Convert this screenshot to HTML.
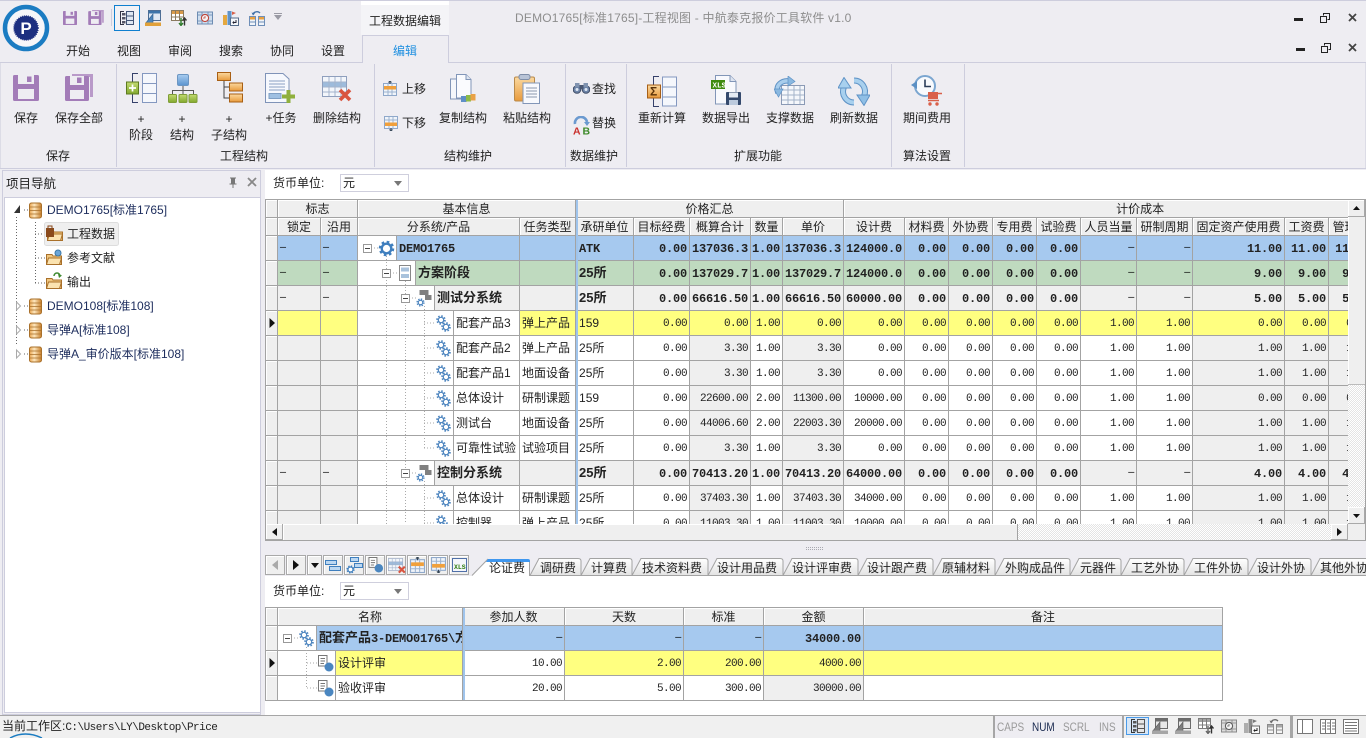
<!DOCTYPE html>
<html><head><meta charset="utf-8"><style>
*{box-sizing:border-box}
html,body{margin:0;padding:0}
body{width:1366px;height:738px;overflow:hidden;background:#eeedf2;position:relative;font:12px/16px "Liberation Sans","Noto Sans CJK SC",sans-serif;color:#222}
.a{position:absolute}
.t{position:absolute;white-space:nowrap;line-height:16px}
.c{position:absolute;white-space:nowrap;line-height:16px;transform:translateX(-50%)}
.sep{position:absolute;top:64px;width:1px;height:103px;background:#cdcddd}
.grid{position:absolute;overflow:hidden;background:#fff}
table{border-collapse:separate;border-spacing:0;table-layout:fixed;position:absolute;left:0;top:0}
td,th{box-sizing:border-box;border-right:1px solid #a3a3a3;border-bottom:1px solid #a3a3a3;overflow:hidden;white-space:nowrap;padding:2px 2px 0 0;text-align:right;font:11px/14px "Liberation Mono",monospace;letter-spacing:-.6px;color:#222;height:25px}
th{height:18px;background:#efefef;font:12px/16px "Liberation Sans","Noto Sans CJK SC",sans-serif;letter-spacing:0;text-align:center;font-weight:400;padding:0;box-shadow:inset 1px 1px #fff}
td.l{font:12px/14px "Liberation Sans","Noto Sans CJK SC",sans-serif;letter-spacing:0;text-align:left;padding:0 0 0 2px}
td.u{padding-left:3px}
td.f{text-align:left;padding-left:2px;font-weight:400!important;font-size:10px!important;color:#000}
td.d{font-weight:400!important;font-size:10px!important;color:#000}
td.tr{padding:0;background:#fff!important;text-align:left}
td:first-child{background:#efefef!important;box-shadow:inset 1px 1px #fff}
.n{height:24px;border-left:1px solid #a3a3a3;padding-left:2px;font:12px/24px "Liberation Sans","Noto Sans CJK SC",sans-serif;letter-spacing:0;overflow:hidden}
.b td{background:#a6c9ef}.b .n{background:#a6c9ef}
.g td{background:#bfdabf}.g .n{background:#bfdabf}
.h td{background:#efefef}.h .n{background:#efefef}
.y td{background:#ffff80}.y .n{background:#ffff80}
.b td,.g td,.h td{font-weight:700;font-size:12px;letter-spacing:-.2px}
.b td.l,.g td.l,.h td.l{font-size:13px;letter-spacing:0}
.b .n,.g .n,.h .n{font-weight:700;font-size:13px}
.m{font-family:"Liberation Mono",monospace;font-size:12px;letter-spacing:-.2px}
.k td:nth-child(2),.k td:nth-child(3),.k td:nth-child(8),.k td:nth-child(10),.k td:nth-child(18),.k td:nth-child(19),.k td:nth-child(20){background:#efefef}
.bar{position:absolute;background:#9fc4ec;width:2px}
.btn{position:absolute;top:555px;height:20px;background:#efefef;border:1px solid #a9a9a9;box-shadow:inset 1px 1px #fff}
.combo{position:absolute;width:69px;height:18px;background:#fff;border:1px solid #cfcfdd;padding-left:2px;line-height:16px}
.combo:after{content:"";position:absolute;right:6px;top:6px;border:4px solid transparent;border-top:5px solid #777;border-bottom:0}
.ind{position:absolute;top:719px;line-height:16px;font-size:12px;color:#999;transform:scaleX(.83);transform-origin:0 50%}
.dither{background:repeating-conic-gradient(#e4e4e4 0 25%,#fff 0 50%) 0 0/2px 2px}
.sb{position:absolute;background:#efefef;border-right:1px solid #a9a9a9;border-bottom:1px solid #a9a9a9;box-shadow:inset 1px 1px #fff}
</style></head><body>

<svg width="0" height="0" style="position:absolute"><defs>
<linearGradient id="org" x1="0" y1="0" x2="0" y2="1"><stop offset="0" stop-color="#fbd9a0"/><stop offset="1" stop-color="#e89a3c"/></linearGradient>
<linearGradient id="grn" x1="0" y1="0" x2="0" y2="1"><stop offset="0" stop-color="#c3db72"/><stop offset="1" stop-color="#82a82e"/></linearGradient>
<linearGradient id="blu" x1="0" y1="0" x2="0" y2="1"><stop offset="0" stop-color="#a9cdf0"/><stop offset="1" stop-color="#5b94cf"/></linearGradient>
<linearGradient id="db" x1="0" y1="0" x2="1" y2="0"><stop offset="0" stop-color="#e9a550"/><stop offset=".4" stop-color="#fde6bd"/><stop offset="1" stop-color="#c8802c"/></linearGradient>
<linearGradient id="tab" x1="0" y1="0" x2="0" y2="1"><stop offset="0" stop-color="#fff"/><stop offset="1" stop-color="#e3e3e3"/></linearGradient>

<symbol id="sv" viewBox="0 0 26 26"><rect width="26" height="26" rx="1.5" fill="#a37cb8"/><path fill="#eeedf2" d="M5 0H21V9H5z"/><rect x="14" y="1.500" width="4.500" height="5.500" fill="#a37cb8"/><rect x="5" y="14" width="16" height="10" fill="#eeedf2"/></symbol>
<symbol id="sa" viewBox="0 0 28 27"><path fill="#b99ac9" d="M7 0H28V23H25V3H7z"/><rect y="2" width="24" height="25" rx="1.500" fill="#a37cb8"/><path fill="#eeedf2" d="M5 2H19V11H5z"/><rect x="12" y="3.500" width="4.500" height="5.500" fill="#a37cb8"/><rect x="5" y="16" width="14" height="9" fill="#eeedf2"/></symbol>

<symbol id="tb" viewBox="0 0 15 30"><rect x=".5" y=".5" width="14" height="29" fill="#f5f7fc" stroke="#8498c0"/><path d="M1 10.500H14M1 20.500H14" stroke="#8498c0" fill="none"/></symbol>

<symbol id="stage" viewBox="0 0 31 30"><path d="M12 .5H6.500V29.500H12" fill="none" stroke="#35406a"/><use href="#tb" x="16" y="0" width="15" height="30"/><rect x=".5" y="9" width="12" height="12" fill="url(#grn)" stroke="#5d7a20"/><path d="M6.500 11.500V18.500M3 15H10" stroke="#fff" stroke-width="1.700"/></symbol>

<symbol id="struct" viewBox="0 0 30 30"><rect x="9.500" y=".5" width="11" height="11" rx="1.500" fill="url(#blu)" stroke="#6c96c2"/><path d="M15 12V16M4.500 21V16.500H25.500V21M15 16.500V21" stroke="#555" fill="none"/><g fill="url(#grn)" stroke="#7f9d38"><rect x=".5" y="20.500" width="8" height="8" rx="1"/><rect x="11" y="20.500" width="8" height="8" rx="1"/><rect x="21" y="20.500" width="8" height="8" rx="1"/></g></symbol>

<symbol id="sub" viewBox="0 0 26 31"><rect x=".5" y=".5" width="13" height="8" fill="url(#org)" stroke="#a85f14"/><path d="M7 9V26H12M7 15H12" stroke="#444" fill="none"/><rect x="12.500" y="11" width="13" height="8" fill="url(#org)" stroke="#a85f14"/><rect x="12.500" y="22" width="13" height="8" fill="url(#org)" stroke="#a85f14"/></symbol>

<symbol id="task" viewBox="0 0 31 31"><path d="M.5.5H18L24 6V29.500H.5z" fill="#f6f8fd" stroke="#7f93b8"/><path d="M4 8H20M4 11H20M4 14H20M4 17H20" stroke="#8aa0c4" fill="none"/><rect x="4" y="20.500" width="12" height="5" fill="#9fc0e2" stroke="#7f9fc4"/><path d="M23.500 17V30M17 23.500H30" stroke="#8fb03c" stroke-width="4"/></symbol>

<symbol id="del" viewBox="0 0 30 26"><rect x=".5" y=".5" width="24" height="20" fill="#f3f6fb" stroke="#8f9fbd"/><rect x="1" y="6" width="23" height="5" fill="#9dbbdc"/><path d="M1 6H24M1 11H24M1 16H24M7 1V20M13 1V20M19 1V20" stroke="#a4b4cc" fill="none"/><path d="M18 14L28 24M28 14L18 24" stroke="#d9543f" stroke-width="3.600"/></symbol>

<symbol id="up" viewBox="0 0 14 15"><rect x=".5" y="2.500" width="13" height="12" fill="#f0f4fa" stroke="#8fa8ca"/><path d="M5 3V14M9 3V14M1 11H13" stroke="#9db3d0" fill="none"/><rect x="1" y="5" width="12" height="3.500" fill="#f0a03c"/><path d="M7 3V0M5.500 1.500L7 0L8.500 1.500" stroke="#345" fill="none"/></symbol>
<symbol id="dn" viewBox="0 0 14 15"><rect x=".5" y=".5" width="13" height="12" fill="#f0f4fa" stroke="#8fa8ca"/><path d="M5 1V12M9 1V12M1 4H13" stroke="#9db3d0" fill="none"/><rect x="1" y="6.500" width="12" height="3.500" fill="#f0a03c"/><path d="M7 12V15M5.500 13.500L7 15L8.500 13.500" stroke="#345" fill="none"/></symbol>

<symbol id="copy" viewBox="0 0 27 30"><path d="M.5 5H10L13 8V25H.5z" fill="#f5f7fb" stroke="#8296b8"/><path d="M6.500.5H16L21 5.500V24H6.500z" fill="#fafbfe" stroke="#8296b8"/><path d="M16 .5V5.500H21" fill="#dfe6f1" stroke="#8296b8"/><rect x="11" y="22" width="5.500" height="6" fill="#5f8fc7"/><rect x="16" y="21" width="5" height="6.500" fill="#8dbb48"/><rect x="20.500" y="20" width="5" height="6.500" fill="#e9a247"/></symbol>

<symbol id="paste" viewBox="0 0 26 30"><rect x=".5" y="3" width="20" height="24" rx="1.500" fill="url(#org)" stroke="#b98a4a"/><rect x="5" y=".5" width="11" height="5" rx="2" fill="#b8c3d6" stroke="#7f8ea8"/><rect x="9" y="9" width="16.500" height="20.500" fill="#f8f9fd" stroke="#8296b8"/><path d="M12 14H23M12 17H23M12 20H23M12 23H23" stroke="#8a97ad" fill="none"/></symbol>

<symbol id="bino" viewBox="0 0 17 12"><circle cx="4" cy="7.500" r="3.800" fill="#6d84a8" stroke="#3e4c66"/><circle cx="13" cy="7.500" r="3.800" fill="#6d84a8" stroke="#3e4c66"/><rect x="2" y="1" width="4.500" height="4" fill="#8093b0"/><rect x="10.500" y="1" width="4.500" height="4" fill="#8093b0"/><rect x="6.500" y="3" width="4" height="4" fill="#4a5873"/><circle cx="4" cy="7.500" r="1.500" fill="#dfe8f4"/><circle cx="13" cy="7.500" r="1.500" fill="#dfe8f4"/></symbol>

<symbol id="repl" viewBox="0 0 17 19"><path d="M2 8A6 6 0 0 1 14 6" fill="none" stroke="#6b9ad0" stroke-width="2.600"/><path d="M11 6H17L14 10z" fill="#6b9ad0"/><text x="0" y="18.500" font-family="Liberation Sans" font-weight="700" font-size="10.500" fill="#c9302c">A</text><text x="9.500" y="18.500" font-family="Liberation Sans" font-weight="700" font-size="10.500" fill="#3d8a2a">B</text></symbol>

<symbol id="calc" viewBox="0 0 30 31"><path d="M12 .5H6.500V30.500H12" fill="none" stroke="#35406a"/><use href="#tb" x="15" y="0" width="15" height="31"/><rect x=".5" y="9" width="13" height="13" fill="url(#org)" stroke="#a65f17"/><text x="3" y="19.500" font-family="Liberation Sans" font-weight="700" font-size="12" fill="#5b3208">Σ</text></symbol>

<symbol id="xls" viewBox="0 0 30 30"><path d="M4.500.5H19L25 6.500V29H4.500z" fill="#f8f9fd" stroke="#8296b8"/><path d="M19 .5V6.500H25" fill="#dde4f0" stroke="#8296b8"/><rect y="5" width="14" height="9" fill="#3f8a10"/><text x="1.500" y="12.500" font-family="Liberation Mono" font-weight="700" font-size="7.500" fill="#fff">XLS</text><rect x="15" y="17" width="15" height="13" rx="1" fill="#354a6d"/><rect x="18" y="17.500" width="9" height="5" fill="#e5ebf4"/><rect x="18" y="25" width="9" height="5" fill="#bccadd"/></symbol>

<symbol id="sup" viewBox="0 0 31 29"><rect x="7.500" y="9.500" width="23" height="19" fill="#f5f7fb" stroke="#8b9ab5"/><path d="M8 14H30M8 19H30M8 24H30M14 10V28M20 10V28M26 10V28" stroke="#a4b3ca" fill="none"/><path d="M4 17C1 9 8 4 15 5" fill="none" stroke="#5f93c6" stroke-width="5.500"/><path d="M4 17C1 9 8 4 15 5" fill="none" stroke="#a8cdec" stroke-width="3.500"/><path d="M14 0L21 5.500L14 10z" fill="#8ab8e0" stroke="#5f93c6" stroke-width=".7"/><path d="M0 13H9L4.500 21z" fill="#8ab8e0" stroke="#5f93c6" stroke-width=".7"/></symbol>

<symbol id="ref" viewBox="0 0 32 29"><path d="M16 25.500A11 11 0 0 1 6 10" fill="none" stroke="#5f93c6" stroke-width="6"/><path d="M16 25.500A11 11 0 0 1 6 10" fill="none" stroke="#a8d0ee" stroke-width="4"/><path d="M16 3.500A11 11 0 0 1 26 19" fill="none" stroke="#5f93c6" stroke-width="6"/><path d="M16 3.500A11 11 0 0 1 26 19" fill="none" stroke="#a8d0ee" stroke-width="4"/><path d="M6 .5L13 11H0z" fill="#a8d0ee" stroke="#5f93c6"/><path d="M26 28.500L19 18H32z" fill="#8fbfe6" stroke="#5f93c6"/></symbol>

<symbol id="per" viewBox="0 0 32 32"><circle cx="14" cy="11" r="10" fill="#f8fafd" stroke="#7ba6d0" stroke-width="2"/><path d="M14 4.500V11.500H20" fill="none" stroke="#2c3e5a" stroke-width="1.600"/><path d="M0 10L6 6V14z" fill="#5c90c4"/><rect x="17" y="17" width="10" height="7" fill="#d9604a"/><path d="M27 18.500H31M17 25.500H28" stroke="#d9604a" stroke-width="1.600"/><circle cx="19" cy="29" r="1.700" fill="#d9604a"/><circle cx="26" cy="29" r="1.700" fill="#d9604a"/></symbol>

<symbol id="q1" viewBox="0 0 14 14"><path d="M4 .5H.5V13.500H4" fill="none" stroke="#334"/><rect x="6.500" y=".5" width="7" height="13" fill="#dfe7f2" stroke="#445577"/><path d="M7 5H13M7 9.500H13" stroke="#445577"/><rect x="2" y="2" width="3.500" height="2.500" fill="#556"/><rect x="2" y="6" width="3.500" height="2.500" fill="#556"/><rect x="2" y="10" width="3.500" height="2.500" fill="#556"/></symbol>
<symbol id="q2" viewBox="0 0 16 16"><rect x="3.500" y=".5" width="12" height="10" fill="#dfe8f4" stroke="#4e6e95"/><rect x="4" y="1" width="11" height="2.500" fill="#3d74aa"/><path d="M0 14L8 4V14z" fill="#4c85bb" stroke="#2c5a8a" stroke-width=".6"/><rect y="12.500" width="16" height="3.500" fill="#e0a03a"/></symbol>
<symbol id="q3" viewBox="0 0 16 16"><rect x=".5" y=".5" width="12" height="10" fill="#fff" stroke="#8a7a60"/><rect x="1" y="1" width="11" height="3" fill="#d99a4a"/><path d="M4.500 1V10M8.500 1V10M1 7H12" stroke="#8a7a60" fill="none"/><path d="M10 8V15M8 13L10 15.500L12 13" stroke="#2e7a2a" fill="none" stroke-width="1.400"/><path d="M13.500 15.500V8.500M11.500 10.500L13.500 8L15.500 10.500" stroke="#333" fill="none" stroke-width="1.400"/></symbol>
<symbol id="q4" viewBox="0 0 16 13"><rect x=".5" y=".5" width="15" height="12" fill="#cfdeef" stroke="#6d8cb2"/><path d="M1 3.500H15M1 9.500H15M5 1V12M11 1V12" stroke="#7d9bbf" fill="none"/><circle cx="8" cy="6.500" r="3.600" fill="#f5f5f5" stroke="#c0453a" stroke-width="1.100"/><path d="M8 4.500V6.500H6" stroke="#c0453a" fill="none" stroke-width=".8"/></symbol>
<symbol id="q5" viewBox="0 0 16 16"><rect x="0" y="5" width="4" height="10" fill="#e5a83f"/><rect x="4.500" y="1" width="4" height="14" fill="#5f93c8"/><path d="M9 1.500L13 3L9 5z" fill="#d9604a"/><rect x="7.500" y="8" width="8" height="7.500" fill="#f5f7fb" stroke="#556b8a"/><path d="M13 10V12.500H10M11 11.500L10 12.500L11 13.500" stroke="#223" fill="none"/></symbol>
<symbol id="q6" viewBox="0 0 16 16"><rect x=".5" y="6.500" width="6" height="9" fill="#f0f4fa" stroke="#6f8fb8"/><rect x="9.500" y="6.500" width="6" height="9" fill="#f0f4fa" stroke="#6f8fb8"/><rect x="1" y="7" width="5" height="2.500" fill="#e8a040"/><rect x="10" y="7" width="5" height="2.500" fill="#e8a040"/><path d="M1 12H6M10 12H15" stroke="#6f8fb8"/><path d="M4 4.500A4 3.500 0 0 1 11 3" fill="none" stroke="#3e6fa8" stroke-width="1.300"/><path d="M2.500 2.500L4 5.500L6 3.500z" fill="#3e6fa8"/></symbol>

<symbol id="gear" viewBox="0 0 16 16"><circle cx="8" cy="8" r="5.800" fill="none" stroke="#3f7fbe" stroke-width="3" stroke-dasharray="2.300 2.250"/><circle cx="8" cy="8" r="4.500" fill="#fff" stroke="#3f7fbe" stroke-width="2.200"/></symbol>
<symbol id="gears" viewBox="0 0 15 17"><g fill="none" stroke="#4d85bf"><circle cx="5" cy="5" r="3.800" stroke-width="2" stroke-dasharray="1.500 1.500"/><circle cx="5" cy="5" r="2.700" stroke-width="1.200"/><circle cx="10" cy="12" r="3.800" stroke-width="2" stroke-dasharray="1.500 1.500"/><circle cx="10" cy="12" r="2.700" stroke-width="1.200"/></g></symbol>
<symbol id="sys" viewBox="0 0 16 17"><rect x="3.500" y="0" width="9" height="5" fill="#808080"/><rect x="9" y="5" width="6.500" height="5" fill="#808080"/><g fill="none" stroke="#4d85bf"><circle cx="4.500" cy="12.500" r="3.200" stroke-width="1.800" stroke-dasharray="1.300 1.200"/><circle cx="4.500" cy="12.500" r="2.200" stroke-width="1.100"/></g></symbol>
<symbol id="dc" viewBox="0 0 16 17"><path d="M.5.5H9V11H.5z" fill="#fff" stroke="#777"/><path d="M2.500 3.500H7M2.500 6H7M2.500 8.500H6" stroke="#777" fill="none"/><circle cx="11" cy="12" r="4.500" fill="#4a86c0"/></symbol>
<symbol id="dbi" viewBox="0 0 13 17"><rect x=".5" y="1" width="12" height="15" rx="2" fill="url(#db)" stroke="#a9702a"/><path d="M1 5H12M1 8.500H12M1 12H12" stroke="#a9702a" stroke-width=".8"/></symbol>
<symbol id="fold" viewBox="0 0 16 14"><path d="M.5 3.500H6L7 5H15.500V13.500H.5z" fill="#f0c67e" stroke="#a9702a"/><path d="M2.500 7H15.500L13.500 13.500H.5z" fill="#fbe3b0" stroke="#a9702a"/></symbol>
</defs></svg>

<!-- Top strip -->
<div class="a" style="left:0;top:0;width:1366px;height:1px;background:#cdcddd"></div>
<div class="a" style="left:361px;top:1px;width:88px;height:5px;background:#fff"></div>
<div class="a" style="left:361px;top:5px;width:88px;height:30px;background:#f4f4f7"></div>
<div class="a" style="left:0;top:62px;width:1366px;height:1px;background:#cdcddd"></div>
<div class="a" style="left:362px;top:35px;width:87px;height:28px;background:#eeedf2;border:1px solid #cdcddd;border-bottom:0"></div>
<div class="a" style="left:0;top:168px;width:1366px;height:1px;background:#cdcddd"></div>
<div class="a" style="left:0;top:63px;width:1px;height:105px;background:#dcdce6"></div>
<div class="a" style="left:1365px;top:63px;width:1px;height:105px;background:#dcdce6"></div>

<!-- Logo -->
<svg class="a" style="left:2px;top:4px" width="48" height="48" viewBox="0 0 48 48"><circle cx="24" cy="24" r="21" fill="#f6f6f9" stroke="#1b7cc2" stroke-width="4.500"/><circle cx="24" cy="24" r="12" fill="#1d2f80" stroke="#1d2f80" stroke-width="1.500" stroke-dasharray="1 1"/><text x="24" y="30" text-anchor="middle" font-family="Liberation Sans" font-weight="700" font-size="17" fill="#fff">P</text></svg>

<!-- Quick access -->
<div class="a" style="left:111px;top:9px;width:1px;height:17px;background:#cdcddd"></div>
<div class="a" style="left:114px;top:5px;width:26px;height:26px;border:1px solid #0f7fcf;background:#f2f2f6"></div>

<svg class="a" style="left:0;top:0" width="1366" height="170" viewBox="0 0 1366 170">
<use href="#sv" x="63" y="11" width="14" height="14"/>
<use href="#sa" x="88" y="10" width="16" height="15"/>
<use href="#q1" x="120" y="11" width="14" height="14"/>
<use href="#q2" x="145" y="10" width="16" height="16"/>
<use href="#q3" x="171" y="10" width="16" height="16"/>
<use href="#q4" x="197" y="11" width="16" height="14"/>
<use href="#q5" x="223" y="10" width="16" height="16"/>
<use href="#q6" x="249" y="10" width="16" height="16"/>
<path d="M274 15H282L278 20z" fill="#9a9aa4"/><path d="M274 13.500H282" stroke="#9a9aa4"/>
<use href="#sv" x="13" y="75" width="26" height="26"/>
<use href="#sa" x="65" y="74" width="28" height="27"/>
<use href="#stage" x="126" y="73" width="31" height="30"/>
<use href="#struct" x="168" y="74" width="30" height="30"/>
<use href="#sub" x="217" y="72" width="26" height="31"/>
<use href="#task" x="265" y="73" width="31" height="31"/>
<use href="#del" x="322" y="76" width="30" height="26"/>
<use href="#up" x="383" y="81" width="14" height="15"/>
<use href="#dn" x="384" y="116" width="14" height="15"/>
<use href="#copy" x="450" y="74" width="27" height="30"/>
<use href="#paste" x="514" y="74" width="26" height="30"/>
<use href="#bino" x="573" y="82" width="17" height="12"/>
<use href="#repl" x="573" y="116" width="17" height="19"/>
<use href="#calc" x="647" y="76" width="30" height="31"/>
<use href="#xls" x="711" y="75" width="30" height="30"/>
<use href="#sup" x="774" y="76" width="31" height="29"/>
<use href="#ref" x="838" y="77" width="32" height="29"/>
<use href="#per" x="911" y="75" width="32" height="32"/>
<!-- window buttons -->
<g fill="#222"><rect x="1294" y="18" width="9" height="3"/><rect x="1296" y="48" width="9" height="3"/></g>
<g fill="none" stroke="#222" stroke-width="1"><path d="M1323.500 15.500V13.500H1329.500V19.500H1327.500"/><rect x="1320.500" y="16.500" width="6" height="6" fill="#eeedf2"/><path d="M1324.500 45.500V43.500H1330.500V49.500H1328.500"/><rect x="1321.500" y="46.500" width="6" height="6" fill="#eeedf2"/></g>
<g stroke="#444" stroke-width="1.800"><path d="M1349 14L1356 21M1356 14L1349 21M1349 44L1356 51M1356 44L1349 51"/></g>
</svg>

<div class="t" style="left:515px;top:10px;color:#8d8d8d;font-size:12px;letter-spacing:.2px">DEMO1765[标准1765]-工程视图 - 中航泰克报价工具软件 v1.0</div>
<div class="t" style="left:369px;top:13px;color:#222">工程数据编辑</div>
<div class="t" style="left:66px;top:43px">开始</div>
<div class="t" style="left:117px;top:43px">视图</div>
<div class="t" style="left:168px;top:43px">审阅</div>
<div class="t" style="left:219px;top:43px">搜索</div>
<div class="t" style="left:270px;top:43px">协同</div>
<div class="t" style="left:321px;top:43px">设置</div>
<div class="t" style="left:393px;top:43px;color:#1e8fe0">编辑</div>

<div class="sep" style="left:116px"></div><div class="sep" style="left:374px"></div><div class="sep" style="left:565px"></div><div class="sep" style="left:626px"></div><div class="sep" style="left:891px"></div><div class="sep" style="left:964px"></div>

<div class="c" style="left:26px;top:110px">保存</div>
<div class="c" style="left:79px;top:110px">保存全部</div>
<div class="c" style="left:141px;top:111px">+</div><div class="c" style="left:141px;top:127px">阶段</div>
<div class="c" style="left:182px;top:111px">+</div><div class="c" style="left:182px;top:127px">结构</div>
<div class="c" style="left:229px;top:111px">+</div><div class="c" style="left:229px;top:127px">子结构</div>
<div class="c" style="left:281px;top:110px">+任务</div>
<div class="c" style="left:337px;top:110px">删除结构</div>
<div class="t" style="left:402px;top:81px">上移</div>
<div class="t" style="left:402px;top:115px">下移</div>
<div class="c" style="left:463px;top:110px">复制结构</div>
<div class="c" style="left:527px;top:110px">粘贴结构</div>
<div class="t" style="left:592px;top:81px">查找</div>
<div class="t" style="left:592px;top:115px">替换</div>
<div class="c" style="left:662px;top:110px">重新计算</div>
<div class="c" style="left:726px;top:110px">数据导出</div>
<div class="c" style="left:790px;top:110px">支撑数据</div>
<div class="c" style="left:854px;top:110px">刷新数据</div>
<div class="c" style="left:927px;top:110px">期间费用</div>
<div class="c" style="left:58px;top:148px">保存</div>
<div class="c" style="left:244px;top:148px">工程结构</div>
<div class="c" style="left:468px;top:148px">结构维护</div>
<div class="c" style="left:594px;top:148px">数据维护</div>
<div class="c" style="left:758px;top:148px">扩展功能</div>
<div class="c" style="left:927px;top:148px">算法设置</div>

<!-- Left panel -->
<div class="a" style="left:2px;top:170px;width:259px;height:545px;border:1px solid #cdcddd;background:#eeedf2"></div>
<div class="a" style="left:4px;top:197px;width:257px;height:516px;background:#fff;border:1px solid #cdcddd"></div>
<div class="t" style="left:6px;top:176px;font-size:12.500px">项目导航</div>
<svg class="a" style="left:0;top:170px" width="262" height="200" viewBox="0 170 262 200">
<path d="M230 178H236M231.500 178V184H234.500V178M233 184V188M229.500 184H236.500" fill="#777" stroke="#777"/>
<path d="M248 178L256 186M256 178L248 186" stroke="#888" stroke-width="1.800"/>
<g stroke="#666" fill="none" stroke-dasharray="1 2">
<path d="M16.500 217V345M35.500 222V283M24 210H29M24 306H29M24 330H29M24 354H29M35 234H46M35 258H46M35 283H46"/>
</g>
<path d="M20 205V213H14z" fill="#333"/>
<g fill="#fff" stroke="#aaa"><path d="M16.500 302V310L20.500 306z"/><path d="M16.500 326V334L20.500 330z"/><path d="M16.500 350V358L20.500 354z"/></g>
<use href="#dbi" x="29" y="202" width="13" height="17"/>
<use href="#dbi" x="29" y="298" width="13" height="17"/>
<use href="#dbi" x="29" y="322" width="13" height="17"/>
<use href="#dbi" x="29" y="346" width="13" height="17"/>
<rect x="44.500" y="222.500" width="74" height="23" rx="2" fill="#efefef" stroke="#ddd"/>
<g><use href="#fold" x="47" y="227" width="16" height="14"/><rect x="46" y="228" width="8" height="9" fill="#8a4a1c"/><rect x="48" y="226" width="4" height="3" fill="none" stroke="#8a4a1c"/></g>
<use href="#fold" x="46" y="251" width="16" height="14"/><circle cx="58" cy="253" r="3" fill="#6aa5d8" stroke="#3b78a8"/>
<use href="#fold" x="46" y="275" width="16" height="14"/><path d="M54 276A3 3 0 0 1 60 276" fill="none" stroke="#3f8a30" stroke-width="1.500"/><path d="M58 274L62 275.500L59 278z" fill="#3f8a30"/>
</svg>
<div class="t" style="left:47px;top:202px;color:#1c2c5c">DEMO1765[标准1765]</div>
<div class="t" style="left:67px;top:226px;font-size:12px">工程数据</div>
<div class="t" style="left:67px;top:250px">参考文献</div>
<div class="t" style="left:67px;top:274px">输出</div>
<div class="t" style="left:47px;top:298px;color:#1c2c5c">DEMO108[标准108]</div>
<div class="t" style="left:47px;top:322px;color:#1c2c5c">导弹A[标准108]</div>
<div class="t" style="left:47px;top:346px;color:#1c2c5c">导弹A_审价版本[标准108]</div>

<!-- Main upper panel -->
<div class="a" style="left:265px;top:170px;width:1101px;height:30px;background:#fff"></div>
<div class="t" style="left:273px;top:175px">货币单位:</div>
<div class="combo" style="left:340px;top:174px">元</div>

<div class="grid" style="left:265px;top:199px;width:1083px;height:325px;border-top:1px solid #a3a3a3;border-left:1px solid #a3a3a3">
<table style="width:1107px"><colgroup><col style="width:12px"><col style="width:43px"><col style="width:37px"><col style="width:162px"><col style="width:56px"><col style="width:58px"><col style="width:56px"><col style="width:61px"><col style="width:32px"><col style="width:61px"><col style="width:61px"><col style="width:44px"><col style="width:44px"><col style="width:44px"><col style="width:44px"><col style="width:56px"><col style="width:56px"><col style="width:92px"><col style="width:44px"><col style="width:44px"></colgroup>
<tr><th></th><th colspan="2">标志</th><th colspan="2">基本信息</th><th colspan="5">价格汇总</th><th colspan="10" style="text-align:left;padding-left:272px">计价成本</th></tr>
<tr><th></th><th>锁定</th><th>沿用</th><th>分系统/产品</th><th>任务类型</th><th>承研单位</th><th>目标经费</th><th>概算合计</th><th>数量</th><th>单价</th><th>设计费</th><th>材料费</th><th>外协费</th><th>专用费</th><th>试验费</th><th>人员当量</th><th>研制周期</th><th>固定资产使用费</th><th>工资费</th><th>管理费</th></tr>
<tr class="b"><td></td><td class="f">—</td><td class="f">—</td><td class="tr"><div class="n" style="margin-left:38px"><span class="m">DEMO1765</span></div></td><td></td><td class="l u"><span class="m">ATK</span></td><td>0.00</td><td>137036.3</td><td>1.00</td><td>137036.3</td><td>124000.0</td><td>0.00</td><td>0.00</td><td>0.00</td><td>0.00</td><td class="d">—</td><td class="d">—</td><td>11.00</td><td>11.00</td><td>11.00</td></tr>
<tr class="g"><td></td><td class="f">—</td><td class="f">—</td><td class="tr"><div class="n" style="margin-left:57px">方案阶段</div></td><td></td><td class="l u">25所</td><td>0.00</td><td>137029.7</td><td>1.00</td><td>137029.7</td><td>124000.0</td><td>0.00</td><td>0.00</td><td>0.00</td><td>0.00</td><td class="d">—</td><td class="d">—</td><td>9.00</td><td>9.00</td><td>9.00</td></tr>
<tr class="h"><td></td><td class="f">—</td><td class="f">—</td><td class="tr"><div class="n" style="margin-left:76px">测试分系统</div></td><td></td><td class="l u">25所</td><td>0.00</td><td>66616.50</td><td>1.00</td><td>66616.50</td><td>60000.00</td><td>0.00</td><td>0.00</td><td>0.00</td><td>0.00</td><td class="d">—</td><td class="d">—</td><td>5.00</td><td>5.00</td><td>5.00</td></tr>
<tr class="y"><td></td><td></td><td></td><td class="tr"><div class="n" style="margin-left:95px;background:#fff">配套产品3</div></td><td class="l">弹上产品</td><td class="l u">159</td><td>0.00</td><td>0.00</td><td>1.00</td><td>0.00</td><td>0.00</td><td>0.00</td><td>0.00</td><td>0.00</td><td>0.00</td><td>1.00</td><td>1.00</td><td>0.00</td><td>0.00</td><td>0.00</td></tr>
<tr class="k"><td></td><td></td><td></td><td class="tr"><div class="n" style="margin-left:95px">配套产品2</div></td><td class="l">弹上产品</td><td class="l u">25所</td><td>0.00</td><td>3.30</td><td>1.00</td><td>3.30</td><td>0.00</td><td>0.00</td><td>0.00</td><td>0.00</td><td>0.00</td><td>1.00</td><td>1.00</td><td>1.00</td><td>1.00</td><td>1.00</td></tr>
<tr class="k"><td></td><td></td><td></td><td class="tr"><div class="n" style="margin-left:95px">配套产品1</div></td><td class="l">地面设备</td><td class="l u">25所</td><td>0.00</td><td>3.30</td><td>1.00</td><td>3.30</td><td>0.00</td><td>0.00</td><td>0.00</td><td>0.00</td><td>0.00</td><td>1.00</td><td>1.00</td><td>1.00</td><td>1.00</td><td>1.00</td></tr>
<tr class="k"><td></td><td></td><td></td><td class="tr"><div class="n" style="margin-left:95px">总体设计</div></td><td class="l">研制课题</td><td class="l u">159</td><td>0.00</td><td>22600.00</td><td>2.00</td><td>11300.00</td><td>10000.00</td><td>0.00</td><td>0.00</td><td>0.00</td><td>0.00</td><td>1.00</td><td>1.00</td><td>0.00</td><td>0.00</td><td>0.00</td></tr>
<tr class="k"><td></td><td></td><td></td><td class="tr"><div class="n" style="margin-left:95px">测试台</div></td><td class="l">地面设备</td><td class="l u">25所</td><td>0.00</td><td>44006.60</td><td>2.00</td><td>22003.30</td><td>20000.00</td><td>0.00</td><td>0.00</td><td>0.00</td><td>0.00</td><td>1.00</td><td>1.00</td><td>1.00</td><td>1.00</td><td>1.00</td></tr>
<tr class="k"><td></td><td></td><td></td><td class="tr"><div class="n" style="margin-left:95px">可靠性试验</div></td><td class="l">试验项目</td><td class="l u">25所</td><td>0.00</td><td>3.30</td><td>1.00</td><td>3.30</td><td>0.00</td><td>0.00</td><td>0.00</td><td>0.00</td><td>0.00</td><td>1.00</td><td>1.00</td><td>1.00</td><td>1.00</td><td>1.00</td></tr>
<tr class="h"><td></td><td class="f">—</td><td class="f">—</td><td class="tr"><div class="n" style="margin-left:76px">控制分系统</div></td><td></td><td class="l u">25所</td><td>0.00</td><td>70413.20</td><td>1.00</td><td>70413.20</td><td>64000.00</td><td>0.00</td><td>0.00</td><td>0.00</td><td>0.00</td><td class="d">—</td><td class="d">—</td><td>4.00</td><td>4.00</td><td>4.00</td></tr>
<tr class="k"><td></td><td></td><td></td><td class="tr"><div class="n" style="margin-left:95px">总体设计</div></td><td class="l">研制课题</td><td class="l u">25所</td><td>0.00</td><td>37403.30</td><td>1.00</td><td>37403.30</td><td>34000.00</td><td>0.00</td><td>0.00</td><td>0.00</td><td>0.00</td><td>1.00</td><td>1.00</td><td>1.00</td><td>1.00</td><td>1.00</td></tr>
<tr class="k"><td></td><td></td><td></td><td class="tr"><div class="n" style="margin-left:95px">控制器</div></td><td class="l">弹上产品</td><td class="l u">25所</td><td>0.00</td><td>11003.30</td><td>1.00</td><td>11003.30</td><td>10000.00</td><td>0.00</td><td>0.00</td><td>0.00</td><td>0.00</td><td>1.00</td><td>1.00</td><td>1.00</td><td>1.00</td><td>1.00</td></tr>
</table>
</div>
<div class="bar" style="left:576px;top:200px;height:324px"></div>

<svg class="a" style="left:266px;top:235px" width="253" height="289" viewBox="266 235 253 289">
<path d="M269.500 318V328L275 323z" fill="#111"/>
<g stroke="#aaa" fill="none" stroke-dasharray="1 2">
<path d="M371 248H378M386.500 256V524M405.500 281V524M390 273H399M409 298H416M424.500 306V448M424.500 481V524"/>
<path d="M424 323H435M424 348H435M424 373H435M424 398H435M424 423H435M424 448H435M409 473H416M424 498H435M424 523H435"/>
</g>
<g fill="#fff" stroke="#999"><rect x="363.500" y="244.500" width="8" height="8"/><rect x="382.500" y="269.500" width="8" height="8"/><rect x="401.500" y="294.500" width="8" height="8"/><rect x="401.500" y="469.500" width="8" height="8"/></g>
<path d="M365 248.500H370M384 273.500H389M403 298.500H408M403 473.500H408" stroke="#444"/>
<use href="#gear" x="378" y="240" width="17" height="17"/>
<rect x="399.500" y="265.500" width="11" height="15" fill="#fff" stroke="#888"/><rect x="401" y="267.500" width="8" height="4" fill="#a9c2dc"/><rect x="401" y="274" width="8" height="4" fill="#a9c2dc"/>
<use href="#sys" x="416" y="290" width="16" height="17"/>
<use href="#sys" x="416" y="465" width="16" height="17"/>
<use href="#gears" x="436" y="315" width="15" height="17"/>
<use href="#gears" x="436" y="340" width="15" height="17"/>
<use href="#gears" x="436" y="365" width="15" height="17"/>
<use href="#gears" x="436" y="390" width="15" height="17"/>
<use href="#gears" x="436" y="415" width="15" height="17"/>
<use href="#gears" x="436" y="440" width="15" height="17"/>
<use href="#gears" x="436" y="490" width="15" height="17"/>
<use href="#gears" x="436" y="515" width="15" height="17"/>
</svg>

<!-- Scrollbars -->
<div class="a dither" style="left:1348px;top:199px;width:18px;height:325px;border-right:1px solid #a3a3a3;border-top:1px solid #a3a3a3"></div>
<div class="sb" style="left:1348px;top:200px;width:17px;height:17px"></div>
<svg class="a" style="left:1353px;top:206px" width="7" height="4"><path d="M3.500 0L7 4H0z" fill="#111"/></svg>
<div class="a" style="left:1348px;top:217px;width:17px;height:168px;background:#efefef;border-bottom:1px solid #bbb;box-shadow:inset 1px 0 #fff"></div>
<div class="sb" style="left:1348px;top:507px;width:17px;height:17px"></div>
<svg class="a" style="left:1353px;top:514px" width="7" height="4"><path d="M0 0H7L3.500 4z" fill="#111"/></svg>

<div class="a" style="left:265px;top:524px;width:1101px;height:17px;background:#efefef;border:1px solid #a3a3a3;border-top:0"></div>
<div class="a dither" style="left:1018px;top:524px;width:313px;height:16px"></div>
<div class="a" style="left:283px;top:524px;width:735px;height:16px;background:#efefef;border-right:1px solid #a3a3a3;box-shadow:inset 1px 1px #fff"></div>
<div class="sb" style="left:266px;top:524px;width:17px;height:16px"></div>
<svg class="a" style="left:272px;top:528px" width="5" height="8"><path d="M5 0V8L0 4z" fill="#111"/></svg>
<div class="sb" style="left:1331px;top:524px;width:17px;height:16px"></div>
<svg class="a" style="left:1337px;top:528px" width="5" height="8"><path d="M0 0V8L5 4z" fill="#111"/></svg>

<!-- Splitter -->
<svg class="a" style="left:805px;top:546px" width="20" height="4"><path d="M1 1.500H18M1 3.500H18" stroke="#a8a8b0" stroke-dasharray="1 1"/></svg>

<!-- Lower toolbar -->
<div class="a" style="left:265px;top:576px;width:1101px;height:139px;background:#fff"></div>
<div class="btn" style="left:265px;width:20px"></div><div class="btn" style="left:286px;width:20px"></div><div class="btn" style="left:307px;width:15px"></div><div class="btn" style="left:323px;width:20px"></div><div class="btn" style="left:344px;width:20px"></div><div class="btn" style="left:365px;width:20px"></div><div class="btn" style="left:386px;width:20px"></div><div class="btn" style="left:407px;width:20px"></div><div class="btn" style="left:428px;width:20px"></div><div class="btn" style="left:449px;width:20px"></div>
<svg class="a" style="left:0;top:550px" width="480" height="30" viewBox="0 550 480 30">
<path d="M278 560V570L272 565z" fill="#aaa"/>
<path d="M293 560V570L299 565z" fill="#111"/>
<path d="M311 563H319L315 568z" fill="#111"/>
<g fill="#bcd7f1" stroke="#3f7fbe"><rect x="325.500" y="560.500" width="11" height="4"/><rect x="329.500" y="566.500" width="11" height="4"/></g>
<g fill="#bcd7f1" stroke="#3f7fbe"><rect x="350.500" y="557.500" width="8" height="4"/><rect x="354.500" y="563.500" width="8" height="4"/></g>
<use href="#gear" x="346" y="565" width="9" height="9"/>
<use href="#dc" x="368" y="557" width="16" height="16"/>
<use href="#del" x="388" y="558" width="18" height="16"/>
<use href="#up" x="410" y="557" width="15" height="16"/>
<use href="#dn" x="431" y="557" width="15" height="16"/>
<rect x="452.500" y="558.500" width="14" height="13" fill="#f4f6fb" stroke="#4f6fa8"/><text x="454" y="569" font-family="Liberation Mono" font-weight="700" font-size="6.500" fill="#2f7d10">XLS</text>
</svg>

<!-- Tabs -->
<svg class="a" style="left:470px;top:555px" width="896" height="23" viewBox="470 555 896 23">
<g fill="url(#tab)" stroke="#a3a3a3">
<path d="M530 575.500L539 558.500H578Q581 558.500 581 561V575.500z"/>
<path d="M581 575.500L590 558.500H629Q632 558.500 632 561V575.500z"/>
<path d="M632 575.500L641 558.500H705Q708 558.500 708 561V575.500z"/>
<path d="M708 575.500L717 558.500H780Q783 558.500 783 561V575.500z"/>
<path d="M783 575.500L792 558.500H855Q858 558.500 858 561V575.500z"/>
<path d="M858 575.500L867 558.500H930Q933 558.500 933 561V575.500z"/>
<path d="M933 575.500L942 558.500H992Q995 558.500 995 561V575.500z"/>
<path d="M995 575.500L1004 558.500H1067Q1070 558.500 1070 561V575.500z"/>
<path d="M1070 575.500L1079 558.500H1118Q1121 558.500 1121 561V575.500z"/>
<path d="M1121 575.500L1130 558.500H1181Q1184 558.500 1184 561V575.500z"/>
<path d="M1184 575.500L1193 558.500H1245Q1248 558.500 1248 561V575.500z"/>
<path d="M1248 575.500L1257 558.500H1308Q1311 558.500 1311 561V575.500z"/>
<path d="M1311 575.500L1320 558.500H1370V575.500z"/>
</g>
<path d="M472 576L488 559H527Q530 559 530 562V577H472z" fill="#fff"/>
<path d="M472 575.500L488 559" stroke="#a3a3a3" fill="none"/><path d="M529.500 561V576" stroke="#a3a3a3"/>
<path d="M488 559H528Q530 559 530 561V562H486z" fill="#3f97ef"/>
<g font-family="Liberation Sans,Noto Sans CJK SC,sans-serif" font-size="12" fill="#222">
<text x="489" y="572">论证费</text><text x="540" y="572">调研费</text><text x="591" y="572">计算费</text><text x="642" y="572">技术资料费</text><text x="717" y="572">设计用品费</text><text x="792" y="572">设计评审费</text><text x="867" y="572">设计跟产费</text><text x="942" y="572">原辅材料</text><text x="1005" y="572">外购成品件</text><text x="1080" y="572">元器件</text><text x="1131" y="572">工艺外协</text><text x="1194" y="572">工件外协</text><text x="1257" y="572">设计外协</text><text x="1320" y="572">其他外协</text>
</g>
</svg>

<div class="t" style="left:273px;top:583px">货币单位:</div>
<div class="combo" style="left:340px;top:582px">元</div>

<!-- Lower grid -->
<div class="grid" style="left:265px;top:607px;width:958px;height:94px;border-top:1px solid #a3a3a3;border-left:1px solid #a3a3a3">
<table style="width:957px"><colgroup><col style="width:12px"><col style="width:185px"><col style="width:102px"><col style="width:119px"><col style="width:80px"><col style="width:100px"><col style="width:359px"></colgroup>
<tr><th></th><th>名称</th><th>参加人数</th><th>天数</th><th>标准</th><th>金额</th><th>备注</th></tr>
<tr class="b"><td></td><td class="tr"><div class="n" style="margin-left:38px;white-space:nowrap">配套产品<span class="m">3-DEMO01765\</span>方</div></td><td class="d">—</td><td class="d">—</td><td class="d">—</td><td>34000.00</td><td></td></tr>
<tr class="y"><td></td><td class="tr"><div class="n" style="margin-left:57px">设计评审</div></td><td style="background:#fff">10.00</td><td>2.00</td><td>200.00</td><td>4000.00</td><td></td></tr>
<tr><td></td><td class="tr"><div class="n" style="margin-left:57px">验收评审</div></td><td>20.00</td><td>5.00</td><td>300.00</td><td style="background:#efefef">30000.00</td><td></td></tr>
</table>
</div>
<div class="bar" style="left:463px;top:608px;height:92px"></div>
<svg class="a" style="left:266px;top:625px" width="70" height="76" viewBox="266 625 70 76">
<path d="M269.500 658V668L275 663z" fill="#111"/>
<g stroke="#aaa" fill="none" stroke-dasharray="1 2"><path d="M291 638H299M306.500 647V688M307 663H318M307 688H318"/></g>
<rect x="283.500" y="634.500" width="8" height="8" fill="#fff" stroke="#999"/><path d="M285 638.500H290" stroke="#444"/>
<use href="#gears" x="299" y="630" width="15" height="17"/>
<use href="#dc" x="318" y="655" width="16" height="17"/>
<use href="#dc" x="318" y="680" width="16" height="17"/>
</svg>

<!-- Left edge between panels -->
<div class="a" style="left:262px;top:550px;width:2px;height:165px;background:#eeedf2"></div>

<!-- Status bar -->
<div class="a" style="left:0;top:715px;width:1366px;height:23px;background:#f0f0f0;border-top:1px solid #a6a6a6"></div>
<div class="t" style="left:2px;top:718px">当前工作区:<span style="font:11px/16px 'Liberation Mono',monospace;letter-spacing:-.52px">C:\Users\LY\Desktop\Price</span></div>
<svg class="a" style="left:8px;top:732px" width="36" height="6"><path d="M2 6Q17 -2 34 6" fill="none" stroke="#1b7cc2" stroke-width="1.500"/></svg>
<div class="a" style="left:993px;top:716px;width:2px;height:22px;background:#a6a6a6"></div>
<div class="a" style="left:995px;top:716px;width:127px;height:22px;background:#eeedf2"></div>
<div class="a" style="left:1122px;top:716px;width:2px;height:22px;background:#a6a6a6"></div>
<div class="ind" style="left:997px">CAPS</div>
<div class="ind" style="left:1032px;color:#1a2a50">NUM</div>
<div class="ind" style="left:1063px">SCRL</div>
<div class="ind" style="left:1099px">INS</div>
<div class="a" style="left:1126px;top:717px;width:23px;height:18px;background:#d6e6f6;border:1px solid #4a9ae8"></div>
<div class="a" style="left:1290px;top:716px;width:3px;height:22px;background:#a6a6a6"></div>
<svg class="a" style="left:1120px;top:715px;filter:grayscale(1)" width="246" height="23" viewBox="1120 715 246 23">
<use href="#q1" x="1131" y="719" width="14" height="14"/>
<use href="#q2" x="1152" y="718" width="16" height="16"/>
<use href="#q2" x="1175" y="718" width="16" height="16"/>
<use href="#q3" x="1198" y="718" width="16" height="16"/>
<use href="#q4" x="1221" y="719" width="16" height="14"/>
<use href="#q5" x="1244" y="718" width="16" height="16"/>
<use href="#q6" x="1267" y="718" width="16" height="16"/>
<g fill="#fff" stroke="#777" stroke-width="1"><rect x="1297.500" y="719.500" width="15" height="14"/><rect x="1320.500" y="719.500" width="15" height="14"/><rect x="1343.500" y="719.500" width="15" height="14"/></g>
<path d="M1302.500 720V733M1325.500 720V733M1330.500 720V733M1322 723H1325M1322 726H1325M1322 729H1325M1327 723H1330M1327 726H1330M1327 729H1330M1332 723H1335M1332 726H1335M1332 729H1335M1345 722.500H1357M1345 725.500H1357M1345 728.500H1357M1345 731H1357" stroke="#777" fill="none"/>
</svg>
</body></html>
